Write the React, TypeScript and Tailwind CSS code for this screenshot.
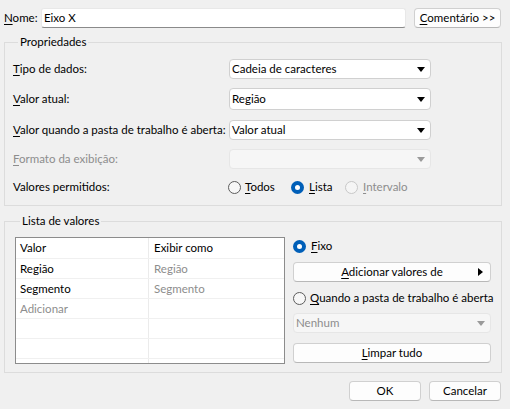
import React from "react"

const btn =
  "flex items-center justify-center h-[20px] bg-[#fdfdfd] border border-[#d0d0d0] border-b-[#b8b8b8] rounded-[4px]"

function Arrow({ disabled }: { disabled?: boolean }) {
  return (
    <svg width="8" height="5" viewBox="0 0 8 5" className="ml-auto mr-[5px]">
      <polygon points="0,0 8,0 4,5" fill={disabled ? "#9a9a9a" : "#000"} />
    </svg>
  )
}

function Combo({ text, h = "h-[20px]", disabled }: { text?: string; h?: string; disabled?: boolean }) {
  return (
    <div
      className={`${h} flex items-center rounded-[4px] border pl-[2px] ${
        disabled ? "bg-[#f6f6f6] border-[#e6e6e6] text-[#8d8d8d]" : "bg-white border-[#d0d0d0]"
      }`}
    >
      <span>{text}</span>
      <Arrow disabled={disabled} />
    </div>
  )
}

function Radio({ checked, disabled }: { checked?: boolean; disabled?: boolean }) {
  if (checked)
    return (
      <span className="w-[13px] h-[13px] rounded-full bg-[#005fb8] flex items-center justify-center shrink-0">
        <span className="w-[5px] h-[5px] rounded-full bg-white" />
      </span>
    )
  return (
    <span
      className={`w-[13px] h-[13px] rounded-full border shrink-0 ${
        disabled ? "border-[#c8c8c8] bg-[#f5f5f5]" : "border-[#5c5c5c] bg-[#f7f7f7]"
      }`}
    />
  )
}

// underline for access key letter
const U = ({ c }: { c: string }) => <span className="underline underline-offset-2">{c}</span>

const rows = [
  ["Região", "Região"],
  ["Segmento", "Segmento"],
  ["Adicionar", ""],
  ["", ""],
  ["", ""],
  ["", ""],
]

export default function App() {
  return (
    <div className="w-[510px] h-[409px] bg-[#f0f0f0] text-black text-[11.5px] leading-[16px] font-['Lato',sans-serif] whitespace-nowrap overflow-hidden">
      {/* Nome row */}
      <div className="flex items-center h-[20px] mt-[8px] pl-[4px]">
        <span className="w-[37px]">
          <U c="N" />ome:
        </span>
        <div className="w-[365px] h-[20px] flex items-center bg-white border border-[#e8e8e8] border-b-[#8a8a8a] rounded-[3px] pl-[2px]">
          Eixo X
        </div>
        <button className={`${btn} ml-[8px] w-[87px]`}>
          <U c="C" />omentário &gt;&gt;
        </button>
      </div>

      {/* Propriedades */}
      <fieldset className="mx-[4px] mt-[6px] w-[498px] border border-[#dcdcdc] pl-[8px] pb-[8px]">
        <legend className="ml-[5px] px-[2px] h-[16px]">Propriedades</legend>
        <div className="flex items-center mt-[9px]">
          <span className="w-[216px]">
            <U c="T" />ipo de dados:
          </span>
          <div className="w-[202px]">
            <Combo text="Cadeia de caracteres" />
          </div>
        </div>
        <div className="flex items-center mt-[9px]">
          <span className="w-[216px]">
            <U c="V" />alor atual:
          </span>
          <div className="w-[202px]">
            <Combo text="Região" h="h-[22px]" />
          </div>
        </div>
        <div className="flex items-center mt-[10px]">
          <span className="w-[216px]">
            <U c="V" />alor quando a pasta de trabalho é aberta:
          </span>
          <div className="w-[202px]">
            <Combo text="Valor atual" />
          </div>
        </div>
        <div className="flex items-center mt-[9px]">
          <span className="w-[216px] text-[#8d8d8d]">
            <U c="F" />ormato da exibição:
          </span>
          <div className="w-[202px]">
            <Combo disabled />
          </div>
        </div>
        <div className="flex items-center h-[20px] mt-[8px]">
          <span className="w-[215px]">Valores permitidos:</span>
          <div className="flex items-center w-[63px] gap-[4px]">
            <Radio />
            <span>
              <U c="T" />odos
            </span>
          </div>
          <div className="flex items-center w-[54px] gap-[5px]">
            <Radio checked />
            <span>
              <U c="L" />ista
            </span>
          </div>
          <div className="flex items-center gap-[5px] text-[#8d8d8d]">
            <Radio disabled />
            <span>
              <U c="I" />ntervalo
            </span>
          </div>
        </div>
      </fieldset>

      {/* Lista de valores */}
      <fieldset className="mx-[4px] mt-[7px] w-[498px] border border-[#dcdcdc] pl-[10px] pb-[8px]">
        <legend className="ml-[5px] px-[2px] h-[16px]">Lista de valores</legend>
        <div className="flex mt-[8px]">
          <div className="w-[270px] h-[127px] bg-white border border-[#8c8c8c] overflow-hidden">
            <div className="flex h-[21px] border-b border-[#f0f0f0]">
              <div className="w-[133px] border-r border-[#ebebeb] pl-[4px] flex items-center">Valor</div>
              <div className="pl-[5px] flex items-center">Exibir como</div>
            </div>
            {rows.map(([a, b], i) => (
              <div key={i} className="flex h-[20px] border-b border-[#f0f0f0]">
                <div
                  className={`w-[133px] border-r border-[#ebebeb] pl-[4px] flex items-center ${
                    a === "Adicionar" ? "text-[#8d8d8d]" : ""
                  }`}
                >
                  {a}
                </div>
                <div className="pl-[5px] flex items-center text-[#8d8d8d]">{b}</div>
              </div>
            ))}
          </div>

          <div className="ml-[8px] w-[198px] flex flex-col">
            <div className="flex items-center h-[20px] gap-[5px] -mt-[1px]">
              <Radio checked />
              <span>
                <U c="F" />ixo
              </span>
            </div>
            <button className={`${btn} relative mt-[6px] w-full`}>
              <span>
                <U c="A" />dicionar valores de
              </span>
              <svg width="5" height="8" viewBox="0 0 5 8" className="absolute right-[7px] top-[5px]">
                <polygon points="0,0 5,4 0,8" fill="#000" />
              </svg>
            </button>
            <div className="flex items-center h-[20px] gap-[4px] mt-[6px]">
              <Radio />
              <span>
                <U c="Q" />uando a pasta de trabalho é aberta
              </span>
            </div>
            <div className="mt-[5px]">
              <Combo text="Nenhum" disabled />
            </div>
            <button className={`${btn} mt-[10px] w-full`}>
              <span>
                <U c="L" />impar tudo
              </span>
            </button>
          </div>
        </div>
      </fieldset>

      {/* OK / Cancelar */}
      <div className="flex justify-end gap-[8px] pr-[9px] mt-[8px]">
        <button className={`${btn} w-[72px]`}>OK</button>
        <button className={`${btn} w-[72px]`}>Cancelar</button>
      </div>
    </div>
  )
}
